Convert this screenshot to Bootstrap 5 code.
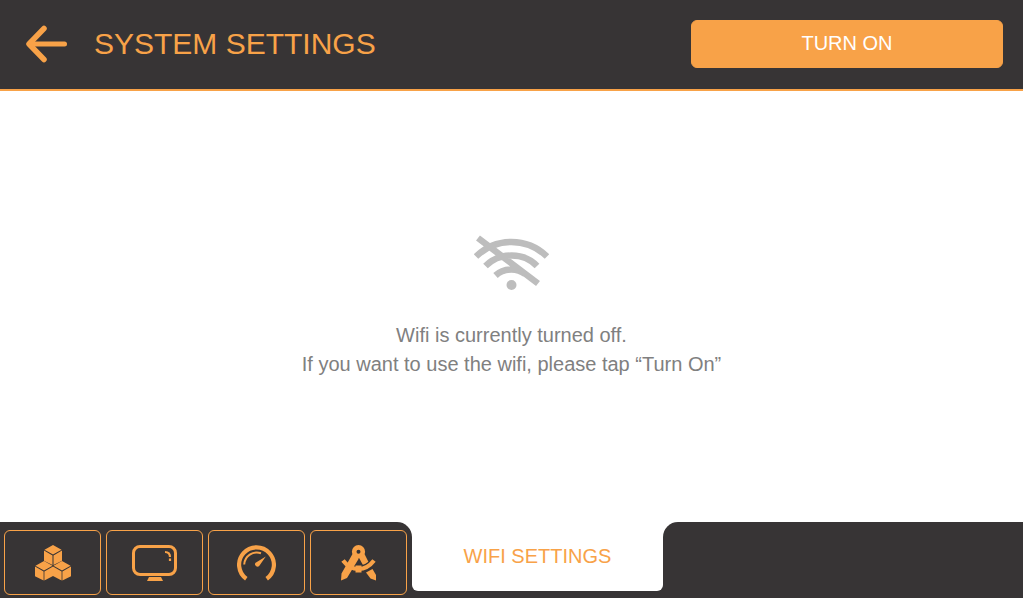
<!DOCTYPE html>
<html lang="en">
<head>
<meta charset="utf-8">
<meta name="viewport" content="width=device-width, initial-scale=1">
<title>System Settings</title>
<link href="https://cdn.jsdelivr.net/npm/bootstrap@5.3.0/dist/css/bootstrap.min.css" rel="stylesheet">
<style>
:root { --accent: #f8a248; --panel: #373435; }
body { font-family: "Liberation Sans", Arial, sans-serif; font-size: 20px; line-height: 29px; background: #fff; }
svg { display: block; }
.topbar { background: var(--panel); border-bottom: 2px solid var(--accent); padding: 20px 20px 21px 26px; gap: 27px; }
.topbar h1 { color: var(--accent); font-size: 30px; line-height: 48px; }
.back-link, .tab-button { color: var(--accent); }
.btn-accent { --bs-btn-bg: var(--accent); --bs-btn-color: #fff; --bs-btn-border-color: var(--accent);
  --bs-btn-hover-bg: #e9943a; --bs-btn-hover-color: #fff; --bs-btn-active-bg: #e9943a; --bs-btn-active-color: #fff;
  --bs-btn-font-size: 20px; --bs-btn-line-height: 30px; --bs-btn-border-radius: 6px;
  width: 312px; padding-top: 7px; padding-bottom: 9px; }
.status { color: #808080; }
.status svg { margin-bottom: 30px; }
.tabs-left { background: var(--panel); padding: 8px 5px 3px 4px; gap: 5px; border-top-right-radius: 15px; }
.tab-button { width: 97px; height: 65px; border: 1px solid var(--accent); border-radius: 6px; background: transparent; }
/* Dark strip under the open tab */
.tab-slot { background: linear-gradient(#fff 50%, var(--panel) 50%); width: 251px; padding-bottom: 7px; }
.tab-open { background: #fff; color: var(--accent); border: 0; border-radius: 0 0 6px 6px; }
.tabs-rest { background: var(--panel); border-top-left-radius: 15px; }
</style>
</head>
<body class="d-flex flex-column min-vh-100">
<header class="topbar d-flex align-items-center">
  <a href="#" class="back-link" aria-label="Back">
    <svg width="41" height="38" viewBox="0 0 41 38" fill="none" stroke="currentColor" stroke-linecap="round" stroke-linejoin="round"><path d="M18 3.500L3 19L18 34.500" stroke-width="5.500"/><path d="M4 19H38.500" stroke-width="5"/><path d="M4 19L9 13.500V24.500Z" fill="currentColor" stroke="none"/></svg>
  </a>
  <h1 class="m-0 fw-normal">SYSTEM SETTINGS</h1>
  <button type="button" class="btn btn-accent ms-auto">TURN ON</button>
</header>

<main class="status flex-grow-1 d-flex flex-column align-items-center justify-content-center text-center">
  <svg width="75" height="56" viewBox="474 235 75 56" fill="none" stroke="#bdbdbd" stroke-width="6.500" aria-hidden="true">
    <path d="M476 256.500Q491 242 511.500 242T547 256.500M485.500 266Q496 255.500 511.500 255.500T537 266M495.500 275.500Q502 269.500 511.500 269.500Q519 269.500 525 274M478 238L538 283.500"/>
    <circle cx="511.500" cy="285" r="5" fill="#bdbdbd" stroke="none"/>
  </svg>
  <p class="m-0">Wifi is currently turned off.<br>If you want to use the wifi, please tap “Turn On”</p>
</main>

<footer>
  <nav class="d-flex align-items-stretch" aria-label="Settings sections">
    <div class="tabs-left d-flex">
      <button type="button" class="tab-button d-flex align-items-center justify-content-center p-0" aria-label="Modules">
        <svg width="36" height="36" viewBox="0 0 36 36" fill="currentColor"><path d="M18 0L26.500 4.800L18 9.600L9.500 4.800ZM9 5.600L17.500 10.400V20L9 15.800ZM27 5.600L18.500 10.400V20L27 15.800ZM9 16.100L17.500 20.700L9 25.500L.500 20.700ZM27 16.100L35.500 20.700L27 25.500L18.500 20.700ZM0 21.600L8.600 26.400V35.500L0 31.200ZM9.400 26.400L18 21.600L26.600 26.400V35.500L18 31L9.400 35.500ZM27.400 26.400L36 21.600V31.200L27.400 35.500Z"/></svg>
      </button>
      <button type="button" class="tab-button d-flex align-items-center justify-content-center p-0" aria-label="Display">
        <svg width="45" height="36" viewBox="0 0 45 36" fill="none" stroke="currentColor"><rect x="1.500" y="1.500" width="42" height="28" rx="6.500" stroke-width="3"/><path d="M33 7Q38 7 38 12M38 13.500V16" stroke-width="2.200"/><path d="M17 32H29L31 36H15Z" fill="currentColor" stroke="none"/></svg>
      </button>
      <button type="button" class="tab-button d-flex align-items-center justify-content-center p-0" aria-label="Speed">
        <svg width="39" height="38" viewBox="0 0 39 38" fill="none" stroke="currentColor"><path d="M9.300 34.800A17.400 17.400 0 1 1 29.700 34.800" stroke-width="4.200"/><path d="M7.200 20.500A12.700 12.700 0 0 1 24 9.200" stroke-width="2"/><path d="M28.800 12.500L22 22.200A2.600 2.600 0 0 1 18.200 19Z" fill="currentColor" stroke="none"/></svg>
      </button>
      <button type="button" class="tab-button d-flex align-items-center justify-content-center p-0" aria-label="Calibration">
        <svg width="36" height="36" viewBox="0 0 36 36" fill="none" stroke="currentColor"><circle cx="17.500" cy="6.700" r="4.300" stroke-width="4.600"/><path d="M17.500 12L23.500 9L27.500 17L22.500 21Z" fill="currentColor" stroke="none"/><path d="M25 27.500L31.500 24L35 30V35.500L29.500 33.500Z" fill="currentColor" stroke="none"/><path d="M17.500 23.500Q26.500 23.500 33 15.500" stroke="#373435" stroke-width="6"/><path d="M2 15.500Q8.500 24 17.500 24T33 15.500" stroke-width="4.200"/><path d="M11.500 9L.500 28.500L0 35.500L6 33L17.500 14V11ZM14.500 20.500H20.500V27.500H14.500Z" fill="currentColor" stroke="none"/></svg>
      </button>
    </div>
    <div class="tab-slot d-flex">
      <button type="button" class="tab-open flex-grow-1 p-0" aria-current="page">WIFI SETTINGS</button>
    </div>
    <div class="tabs-rest flex-grow-1"></div>
  </nav>
</footer>
<script src="https://cdn.jsdelivr.net/npm/bootstrap@5.3.0/dist/js/bootstrap.bundle.min.js"></script>
</body>
</html>
